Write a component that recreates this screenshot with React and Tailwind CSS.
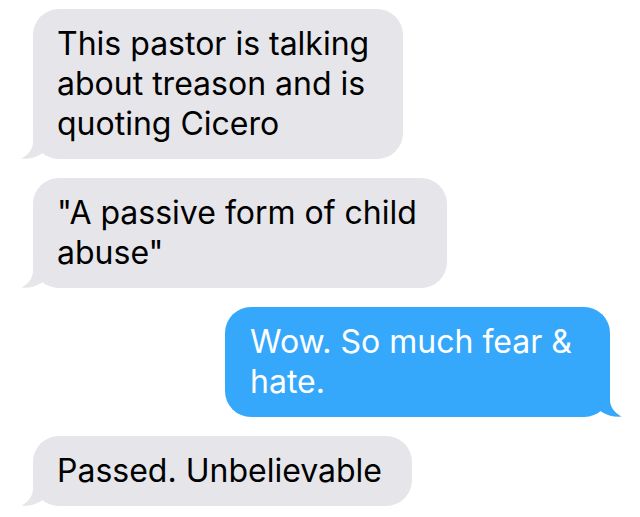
import React from "react";

function LeftTail() {
  return (
    <svg className="absolute left-[-13px] bottom-0" width="32" height="25" viewBox="0 0 32 25">
      <path d="M13,0 L13,8 C13,16 7,22 1,24.6 C9,25.2 16,23.5 22,19.5 L32,10 L32,0 Z" fill="#e5e5ea" />
    </svg>
  );
}

function RightTail() {
  return (
    <svg className="absolute right-[-13px] bottom-0" width="32" height="25" viewBox="0 0 32 25">
      <path d="M19,0 L19,8 C19,16 25,22 31,24.6 C23,25.2 16,23.5 10,19.5 L0,10 L0,0 Z" fill="#36a8fc" />
    </svg>
  );
}

function Left({ w, children }) {
  return (
    <div className="relative ml-[33px] self-start" style={{ width: w }}>
      <LeftTail />
      <div className="relative rounded-[26px] bg-[#e5e5ea] pl-[24px] pr-[4px] pt-[15px] pb-[15px] text-[32px] leading-[40px] text-black whitespace-nowrap">
        {children}
      </div>
    </div>
  );
}

export default function App() {
  return (
    <div
      className="w-[640px] h-[517px] bg-white flex flex-col gap-[19px] pt-[9px] overflow-hidden"
      style={{ fontFamily: "Inter, 'Liberation Sans', sans-serif" }}
    >
      <Left w={370}>
        This pastor is talking<br />about treason and is<br />quoting Cicero
      </Left>
      <Left w={414}>
        "A passive form of child<br />abuse"
      </Left>
      <div className="relative mr-[30px] self-end w-[385px]">
        <RightTail />
        <div className="relative rounded-[26px] bg-[#36a8fc] pl-[25px] pr-[4px] pt-[15px] pb-[15px] text-[32px] leading-[40px] text-white whitespace-nowrap">
          Wow. So much fear &amp;<br />hate.
        </div>
      </div>
      <Left w={379}>Passed. Unbelievable</Left>
    </div>
  );
}
